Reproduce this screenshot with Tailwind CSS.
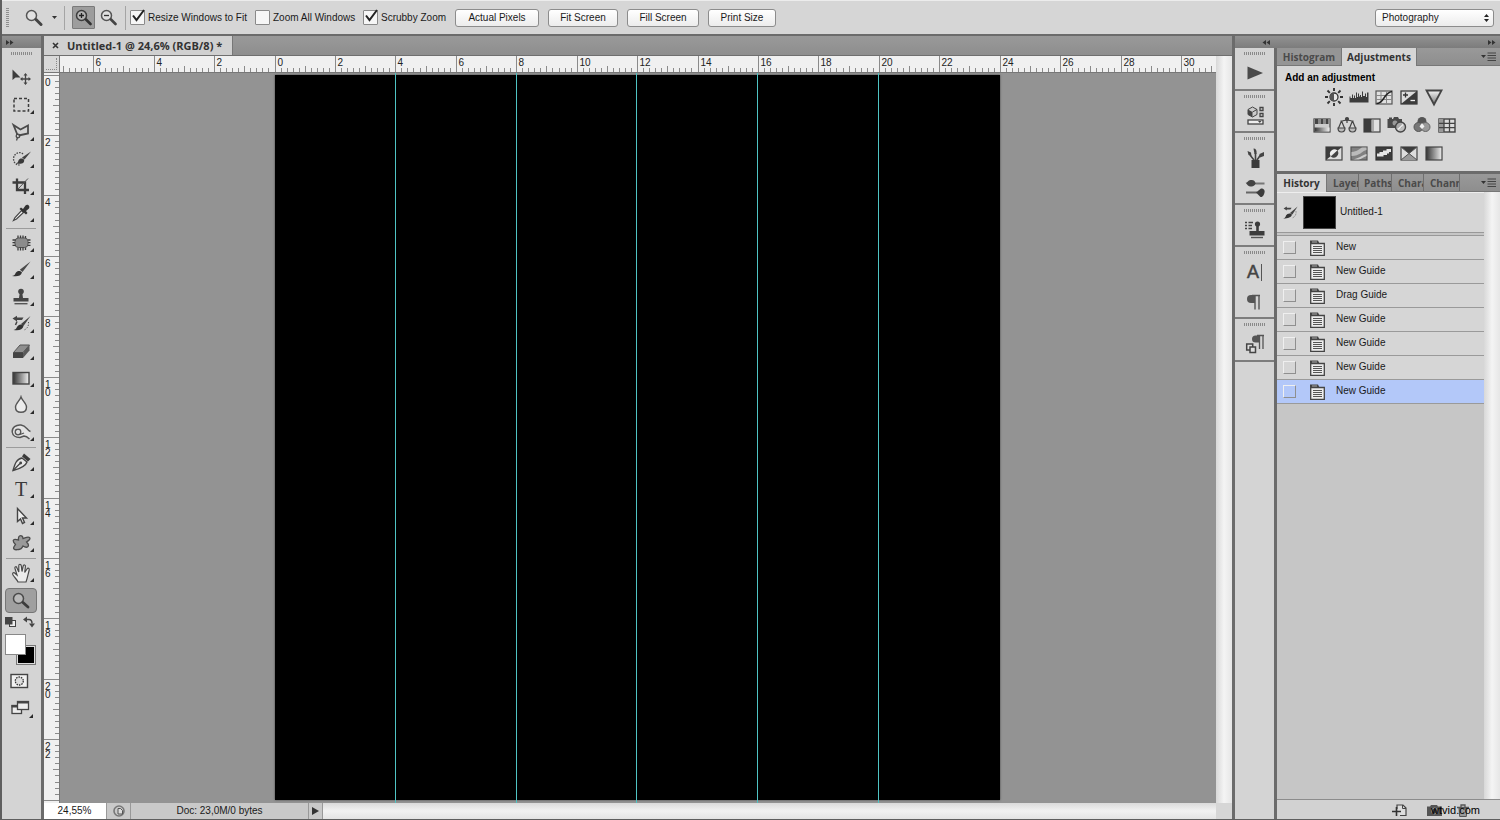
<!DOCTYPE html>
<html lang="en">
<head>
<meta charset="utf-8">
<title>Untitled-1 @ 24,6% (RGB/8)</title>
<script src="https://cdn.jsdelivr.net/npm/@tailwindcss/browser@4"></script>
</head>
<body class="h-screen overflow-hidden flex flex-col bg-[#5f5f5f] pl-0.5 pb-px font-['Liberation_Sans',sans-serif] text-[10px] leading-3 text-[#1a1a1a]">

<!-- Options bar -->
<header class="h-[34px] shrink-0 flex items-center bg-[#d6d6d6] border-t border-[#ececec] pl-1 pr-1.5">
  <div class="w-[3px] h-5 bg-[repeating-linear-gradient(180deg,#8f8f8f_0_1px,transparent_1px_2px)]"></div>
  <button aria-label="Zoom tool presets" class="ml-4 flex items-center gap-2">
    <svg class="w-[18px] h-[18px]" viewBox="0 0 18 18" fill="none"><circle cx="6.500" cy="6.500" r="5" fill="#e2e2e2" stroke="#555" stroke-width="1.500"/><path d="M11 10.500l5 5" stroke="#444" stroke-width="3" stroke-linecap="round"/></svg>
    <svg class="w-[7px] h-1" viewBox="0 0 7 4"><path d="M1 0h5L3.500 3z" fill="#333"/></svg>
  </button>
  <div class="w-px h-6 bg-[#a4a4a4] ml-1.5 mr-[7px]"></div>
  <button aria-label="Zoom in" class="w-[23px] h-[23px] grid place-items-center rounded-[1px] bg-[#9d9d9d] border border-[#7a7a7a]">
    <svg class="w-[17px] h-[17px]" viewBox="0 0 17 17" fill="none"><circle cx="6.500" cy="6.500" r="5" fill="#b4b4b4" stroke="#3c3c3c" stroke-width="1.500"/><path d="M11 10.500l4.500 4.500" stroke="#333" stroke-width="2.600" stroke-linecap="round"/><path d="M4 6.500h5M6.500 4v5" stroke="#222" stroke-width="1.300"/></svg>
  </button>
  <button aria-label="Zoom out" class="w-[23px] h-[23px] ml-0.5 grid place-items-center">
    <svg class="w-[17px] h-[17px]" viewBox="0 0 17 17" fill="none"><circle cx="6.500" cy="6.500" r="5" fill="#e0e0e0" stroke="#555" stroke-width="1.500"/><path d="M11 10.500l4.500 4.500" stroke="#444" stroke-width="2.600" stroke-linecap="round"/><path d="M4 6.500h5" stroke="#333" stroke-width="1.300"/></svg>
  </button>
  <div class="w-px h-6 bg-[#a4a4a4] ml-[5px] mr-1"></div>
  <label class="flex items-center gap-[3px] w-[125px] whitespace-nowrap">
    <span class="relative w-[15px] h-[15px] shrink-0">
      <input type="checkbox" checked class="peer block appearance-none w-[15px] h-[15px] rounded-[1px] border border-[#8a8a8a] bg-[#f6f6f6]">
      <svg class="hidden peer-checked:block absolute left-0 -top-1 w-[17px] h-[17px] pointer-events-none" viewBox="0 0 17 17" fill="none"><path d="M3 9.500l3.500 4.500L14 4" stroke="#222" stroke-width="2"/></svg>
    </span>Resize Windows to Fit</label>
  <label class="flex items-center gap-[3px] w-[108px] whitespace-nowrap">
    <input type="checkbox" class="appearance-none w-[15px] h-[15px] shrink-0 rounded-[1px] border border-[#8a8a8a] bg-[#f6f6f6]">Zoom All Windows</label>
  <label class="flex items-center gap-[3px] w-[92px] whitespace-nowrap">
    <span class="relative w-[15px] h-[15px] shrink-0">
      <input type="checkbox" checked class="peer block appearance-none w-[15px] h-[15px] rounded-[1px] border border-[#8a8a8a] bg-[#f6f6f6]">
      <svg class="hidden peer-checked:block absolute left-0 -top-1 w-[17px] h-[17px] pointer-events-none" viewBox="0 0 17 17" fill="none"><path d="M3 9.500l3.500 4.500L14 4" stroke="#222" stroke-width="2"/></svg>
    </span>Scrubby Zoom</label>
  <div class="flex gap-[9px] whitespace-nowrap">
    <button class="w-[84px] h-[18px] rounded-[3px] border border-[#8c8c8c] bg-linear-to-b from-white to-[#ececec]">Actual Pixels</button>
    <button class="w-[70px] h-[18px] rounded-[3px] border border-[#8c8c8c] bg-linear-to-b from-white to-[#ececec]">Fit Screen</button>
    <button class="w-[72px] h-[18px] rounded-[3px] border border-[#8c8c8c] bg-linear-to-b from-white to-[#ececec]">Fill Screen</button>
    <button class="w-[68px] h-[18px] rounded-[3px] border border-[#8c8c8c] bg-linear-to-b from-white to-[#ececec]">Print Size</button>
  </div>
  <div class="relative ml-auto">
    <select aria-label="Workspace" class="block appearance-none w-[119px] h-[18px] pl-1.5 rounded-[3px] border border-[#8c8c8c] bg-linear-to-b from-white to-[#ececec]"><option>Photography</option></select>
    <svg class="absolute right-1 top-1 w-[7px] h-[10px] pointer-events-none" viewBox="0 0 7 10"><path d="M1 4h5L3.500 1zM1 6h5L3.500 9z" fill="#222"/></svg>
  </div>
</header>

<main class="flex-1 min-h-0 flex gap-[3px] pt-0.5 bg-[#6b6b6b]">

  <!-- Toolbox -->
  <aside class="w-[39px] shrink-0 flex flex-col bg-[#d4d4d4]">
    <div class="h-3 shrink-0 bg-linear-to-b from-[#929292] to-[#7c7c7c] flex items-center pl-1"><svg class="w-2 h-[5px]" viewBox="0 0 8 5"><path d="M0 0l3.500 2.500L0 5zM4 0l3.500 2.500L4 5z" fill="#333"/></svg></div>
    <div class="mx-auto mt-1 mb-[9px] w-[21px] h-[3px] shrink-0 bg-[repeating-linear-gradient(90deg,#8a8a8a_0_1px,transparent_1px_2px)]"></div>

    <div class="flex flex-col items-center pr-px [&>button]:relative [&>button]:w-8 [&>button]:h-[27px] [&>button]:grid [&>button]:place-items-center [&>button]:shrink-0 [&>.sub]:after:absolute [&>.sub]:after:right-[3px] [&>.sub]:after:bottom-1 [&>.sub]:after:w-1 [&>.sub]:after:h-1 [&>.sub]:after:bg-[#2a2a2a] [&>.sub]:after:[clip-path:polygon(100%_0,100%_100%,0_100%)]">
      <button aria-label="Move"><svg class="w-5 h-5" viewBox="0 0 20 20"><path d="M1.500 1.500v10.500l3-2.500h5z" fill="#3c3c3c"/><path d="M14.500 6.500v9M10 11h9" stroke="#444" stroke-width="1.300"/><path d="M14.500 5l2 2.500h-4zM14.500 17l2-2.500h-4zM9 11l2.500-2v4zM20 11l-2.500-2v4z" fill="#444"/></svg></button>
      <button class="sub" aria-label="Marquee"><svg class="w-5 h-5" viewBox="0 0 20 20" fill="none"><rect x="3" y="3.500" width="14.500" height="12.500" stroke="#3c3c3c" stroke-width="1.500" stroke-dasharray="3 2"/></svg></button>
      <button class="sub" aria-label="Lasso"><svg class="w-5 h-5" viewBox="0 0 20 20" fill="none" stroke="#4a4a4a" stroke-width="1.800"><path d="M6.500 13L2.500 3 9.500 7.500 17 3.500V11.500L7.500 13.500"/><circle cx="7" cy="14" r="1.800" stroke-width="1.300"/><path d="M6.500 15.500L5.500 18.500" stroke-width="1.300"/></svg></button>
      <button class="sub" aria-label="Quick selection"><svg class="w-5 h-5" viewBox="0 0 20 20" fill="none"><path d="M12 5C9 2 3 4 2.500 9.500c0 4 2.500 6.500 6 6.500" stroke="#444" stroke-width="1.300" stroke-dasharray="1.500 1.200"/><path d="M20 2.500l-6.500 8-2.500-2z" fill="#444"/><path d="M13 10.500c1 3.500-2 5-8 4 2.500-1 2-2.500 3-4s4-1.500 5 0z" fill="#3a3a3a"/></svg></button>
      <button class="sub" aria-label="Crop"><svg class="w-5 h-5" viewBox="0 0 20 20" fill="none"><path d="M6 2.500v11.500H18M1.500 6.500h12.500v11.500" stroke="#3c3c3c" stroke-width="2.300"/><path d="M7 13L17 2.500" stroke="#555"/></svg></button>
      <button class="sub" aria-label="Eyedropper"><svg class="w-5 h-5" viewBox="0 0 20 20"><path d="M10.500 7.500l2 2-7 6.500-3 1.500 1.500-3z" fill="#eee" stroke="#444" stroke-width="1.200"/><path d="M8.500 6l1.500-1.500 2 1.500 2.500-3.500c2-2 5 .500 3.500 3L15 8l1.500 2L15 11.500z" fill="#333"/></svg></button>
      <div class="w-[30px] h-[3px] border-b border-[#9c9c9c]"></div>
      <button class="sub" aria-label="Patch"><svg class="w-5 h-5" viewBox="0 0 20 20"><rect x="4" y="5" width="13" height="9.500" rx="3.500" fill="#8c8c8c" stroke="#555"/><path d="M7 2.500V5M9.500 2.500V5M12 2.500V5M14.500 3v2M7 14.500v3M9.500 14.500v3M12 14.500v3M14.500 14.500V17M1.500 7h3M1.500 9.700h2.500M1.500 12.300h3M17 7h2.500M17 9.700h2.500M17 12.300h2.500" stroke="#3c3c3c" stroke-width="1.300"/></svg></button>
      <button class="sub" aria-label="Brush"><svg class="w-5 h-5" viewBox="0 0 20 20"><path d="M19.500 1.500L11.500 12l-2.700-2.200z" fill="#4a4a4a"/><path d="M11 12.300c-1 4-5 4.500-10 3.700 3-.500 3-2 4-3.500s3.500-2.500 6-.200z" fill="#333"/></svg></button>
      <button class="sub" aria-label="Clone stamp"><svg class="w-5 h-5" viewBox="0 0 20 20"><circle cx="10" cy="4.500" r="2.800" fill="#444"/><path d="M8.700 6h2.600l.7 5h5.500v3.500H2.500V11H8z" fill="#444"/><path d="M3.500 16.700h13" stroke="#555" stroke-width="1.400"/></svg></button>
      <button class="sub" aria-label="History brush"><svg class="w-5 h-5" viewBox="0 0 20 20" fill="none"><path d="M1.500 4.500l4.500-2.700v1.700h6.500L11 6H6v1.500z" fill="#444"/><path d="M19.500 2l-7 10-2.500-2z" fill="#444"/><path d="M12.500 12c-1 4-4.500 4.700-10 4 2.500-.500 3-2 3.500-3 1.500-2.500 4.500-3.500 6.500-1z" fill="#333"/><path d="M6 7.500L4.500 11" stroke="#444" stroke-width="1.500"/><path d="M17.500 8c.500 4-1.500 7-4.500 8" stroke="#555" stroke-dasharray="1.200 1.500"/></svg></button>
      <button class="sub" aria-label="Eraser"><svg class="w-5 h-5" viewBox="0 0 20 20"><path d="M9 4h9.500l-6.500 7.500H2.500z" fill="#8f8f8f" stroke="#555"/><path d="M2 11.500h10V17H2z" fill="#444"/><path d="M12 11.500L18.500 4v5.500L12 17z" fill="#5a5a5a"/></svg></button>
      <button class="sub" aria-label="Gradient"><svg class="w-5 h-5" viewBox="0 0 20 20"><defs><linearGradient id="gh"><stop stop-color="#333"/><stop offset="1" stop-color="#f0f0f0"/></linearGradient></defs><rect x="2" y="4.500" width="16" height="11.500" fill="url(#gh)" stroke="#444" stroke-width="1.400"/></svg></button>
      <button class="sub" aria-label="Blur"><svg class="w-5 h-5" viewBox="0 0 20 20"><path d="M10 2c1 3.500 5.500 6.500 5.500 10 0 3.300-2.200 5.300-5.500 5.300S4.500 15.300 4.500 12C4.500 8.500 9 5.500 10 2z" fill="#ececec" stroke="#555" stroke-width="1.400"/></svg></button>
      <button class="sub" aria-label="Dodge"><svg class="w-5 h-5" viewBox="0 0 20 20"><path d="M19.500 9.500C16 8.500 15.500 3.500 10 3 5 2.500.8 5.500 1.200 10c.5 3.500 3.500 5.500 7.800 5.500l4-1.500c2 0 3.500 1 5.500 3" fill="#e4e4e4" stroke="#555" stroke-width="1.400"/><circle cx="7" cy="10" r="2.800" fill="#ddd" stroke="#555" stroke-width="1.300"/><path d="M9 12.500l4-1.500" stroke="#555" stroke-width="1.300"/></svg></button>
      <div class="w-[30px] h-[3px] border-b border-[#9c9c9c]"></div>
      <button class="sub" aria-label="Pen"><svg class="w-5 h-5" viewBox="0 0 20 20"><path d="M11 6l5 4c-1.500 4.500-6 6.500-14 8.500C4 11.500 5.500 7 11 6z" fill="#e6e6e6" stroke="#444" stroke-width="1.400"/><path d="M2.500 18l6.500-6.500" stroke="#444" stroke-width="1.200"/><circle cx="9.700" cy="11" r="1.400" fill="#444"/><path d="M11 4.500L13 1.500l6.500 5.500-2.500 2.500z" fill="#3a3a3a"/></svg></button>
      <button aria-label="Type" class="sub font-['Liberation_Serif',serif] text-xl leading-5 text-[#3a3a3a]">T</button>
      <button class="sub" aria-label="Path selection"><svg class="w-5 h-5" viewBox="0 0 20 20"><path d="M6.500 2.500v13l3-2.500 2 4.500 2-1-2-4.500h4z" fill="#eee" stroke="#444" stroke-width="1.400"/></svg></button>
      <button class="sub" aria-label="Custom shape"><svg class="w-5 h-5" viewBox="0 0 20 20"><path d="M8.500 3c2-1 3.500.500 3.500 2.500 2-.500 5-2.500 6.500-1S17 8 15.500 9c1 1.500 3 2.500 1.500 4.500-1.500 1.500-3.500.500-5-.500-1 2-2 3.500-4 3.500s-3.500 1-5-.500 1-3.500 1.500-4.500C3 10 1.500 8.500 2.500 7S6 6.500 7.500 7c0-1.500-.500-3 1-4z" fill="#999" stroke="#4c4c4c" stroke-width="1.300"/></svg></button>
      <div class="w-[30px] h-[3px] border-b border-[#9c9c9c]"></div>
      <button class="sub" aria-label="Hand"><svg class="w-5 h-5" viewBox="0 0 20 20"><path d="M7 19c-1-2.500-3.500-4.500-5-7C.8 9.500 3 9 4.200 10.500L6 12 4 5.500c-.500-2 1.500-2.500 2-.500L7.800 9V2.800c0-2 2.200-2 2.500 0L11 8.500l1.200-5.500c.5-1.700 2.500-1.200 2.200.500L13.700 9.500l2.300-3.500c1-1.500 2.700-.500 2.200 1-1 3.500-1.700 8-3.200 12z" fill="#ececec" stroke="#4a4a4a" stroke-width="1.200"/></svg></button>
      <button aria-label="Zoom" aria-pressed="true" class="mt-0.5 h-[25px]! rounded-sm bg-[#9f9f9f] border border-[#767676]"><svg class="w-5 h-5" viewBox="0 0 20 20"><circle cx="7.500" cy="7.500" r="5" fill="#b9b9b9" stroke="#4a4a4a" stroke-width="1.500"/><path d="M12 11.500l5 4.500" stroke="#3c3c3c" stroke-width="2.800" stroke-linecap="round"/></svg></button>
    </div>

    <!-- Foreground and background colours -->
    <div class="flex justify-between px-[3px] pr-1.5 mt-[3px]">
      <button aria-label="Default colours"><svg class="w-3 h-3" viewBox="0 0 12 12"><rect x="4.500" y="4.500" width="6" height="6" fill="#eee" stroke="#444"/><rect x="0" y="1" width="7.500" height="7.500" fill="#444"/></svg></button>
      <button aria-label="Swap colours"><svg class="w-3 h-3" viewBox="0 0 12 12" fill="none"><path d="M3 3.500h3c2 0 3 1 3 4" stroke="#444" stroke-width="1.500"/><path d="M0 3.500L4 .5v6zM9 11.500l3-4H6z" fill="#444"/></svg></button>
    </div>
    <div class="relative h-[31px] mt-1.5 mx-[3px] shrink-0">
      <button aria-label="Background colour" class="absolute left-[11px] top-[11px] w-[20px] h-[20px] bg-black border border-[#777] shadow-[inset_0_0_0_1px_#ddd]"></button>
      <button aria-label="Foreground colour" class="absolute left-0 top-0 w-[21px] h-[21px] bg-white border border-[#888]"></button>
    </div>
    <button aria-label="Quick mask" class="w-5 mt-2 ml-2"><svg class="w-5 h-4" viewBox="0 0 20 16"><rect x="1" y="1.500" width="16.500" height="13" fill="#f2f2f2" stroke="#444" stroke-width="1.400"/><circle cx="9.300" cy="8" r="4" fill="#ddd" stroke="#333" stroke-width="1.300" stroke-dasharray="1.500 1"/></svg></button>
    <button aria-label="Screen mode" class="relative w-8 mt-[9px] ml-0.5 flex justify-center"><svg class="w-5 h-5" viewBox="0 0 20 20"><rect x="2" y="7.500" width="9.500" height="8" fill="#ececec" stroke="#444" stroke-width="1.300"/><rect x="1.500" y="7" width="10.500" height="2.500" fill="#444"/><rect x="7.500" y="3.500" width="11" height="8" fill="#ececec" stroke="#444" stroke-width="1.300"/><rect x="7" y="3" width="12" height="2.500" fill="#444"/></svg><i class="absolute right-[3px] bottom-0 w-1 h-1 bg-[#2a2a2a] [clip-path:polygon(100%_0,100%_100%,0_100%)]"></i></button>
  </aside>

  <!-- Document window -->
  <section class="flex-1 min-w-0 flex flex-col">
    <div class="h-5 shrink-0 flex items-stretch bg-linear-to-b from-[#999] to-[#8e8e8e] border-b border-[#6f6f6f]">
      <div class="flex items-center gap-2 pl-2 pr-2.5 bg-[#d0d0d0] border-r border-[#777] font-['Open_Sans',sans-serif] font-bold text-[11px] leading-4 text-[#333] whitespace-nowrap">
        <button aria-label="Close document"><svg class="w-[7px] h-[7px]" viewBox="0 0 7 7"><path d="M1 1l5 5M6 1L1 6" stroke="#333" stroke-width="1.600"/></svg></button>
        <span>Untitled-1 @ 24,6% (RGB/8) *</span>
      </div>
    </div>

    <div class="flex-1 min-h-0 grid grid-cols-[16px_minmax(0,1fr)_16px] grid-rows-[17px_minmax(0,1fr)]">
      <div class="bg-[#d8d8d8] border-r border-b border-[#777] p-0.5"><div class="w-full h-full border-r border-b border-dotted border-[#888]"></div></div>
      <div class="bg-[#f0f0f0] border-b border-[#777] overflow-hidden"><svg id="ruler-x" class="w-full h-4" font-size="10" fill="#222"></svg></div>
      <div class="row-span-2 bg-linear-to-r from-[#d8d8d8] via-[#f4f4f4] to-[#e6e6e6]"></div>
      <div class="bg-[#f0f0f0] border-r border-[#777] overflow-hidden"><svg id="ruler-y" class="w-[15px] h-full" font-size="10" fill="#222"></svg></div>
      <!-- Canvas with artboard and guides -->
      <div class="relative overflow-hidden bg-[#939393]">
        <div class="absolute left-[215px] top-0.5 w-[725px] h-[725px] bg-black shadow-[0_0_2px_#444]"></div>
        <div class="absolute top-0 bottom-0 left-[335px] w-px bg-[#4fc4c4]"></div>
        <div class="absolute top-0 bottom-0 left-[456px] w-px bg-[#4fc4c4]"></div>
        <div class="absolute top-0 bottom-0 left-[576px] w-px bg-[#4fc4c4]"></div>
        <div class="absolute top-0 bottom-0 left-[697px] w-px bg-[#4fc4c4]"></div>
        <div class="absolute top-0 bottom-0 left-[818px] w-px bg-[#4fc4c4]"></div>
      </div>
    </div>

    <div class="h-4 shrink-0 flex items-stretch bg-[#c9c9c9] whitespace-nowrap">
      <input aria-label="Zoom level" value="24,55%" class="w-[63px] pr-px bg-white text-center border-r border-[#999]">
      <button aria-label="Document status" class="w-6 grid place-items-center border-r border-[#999]"><svg class="w-3 h-3" viewBox="0 0 12 12" fill="none"><circle cx="6" cy="6" r="5" stroke="#777" stroke-width="1.600"/><path d="M5 3.500h2.500l2 2V9H5z" fill="#ddd" stroke="#555"/></svg></button>
      <div class="w-[178px] text-center leading-4 border-r border-[#999]">Doc: 23,0M/0 bytes</div>
      <button aria-label="Status menu" class="w-3.5 grid place-items-center border-r border-[#999]"><svg class="w-[7px] h-2" viewBox="0 0 7 8"><path d="M0 0l7 4-7 4z" fill="#333"/></svg></button>
      <div class="flex-1 bg-linear-to-b from-[#dadada] via-[#f2f2f2] to-[#e4e4e4]"></div>
      <div class="w-4 bg-[#d6d6d6]"></div>
    </div>
  </section>

  <!-- Right side -->
  <section class="w-[265px] shrink-0 flex flex-col">
    <div class="h-3 shrink-0 flex items-center justify-between pl-[27px] pr-1 bg-linear-to-b from-[#929292] to-[#7c7c7c]">
      <svg class="w-2 h-[5px]" viewBox="0 0 8 5"><path d="M4 0L.5 2.500 4 5zM8 0L4.500 2.500 8 5z" fill="#333"/></svg>
      <svg class="w-2 h-[5px]" viewBox="0 0 8 5"><path d="M0 0l3.500 2.500L0 5zM4 0l3.500 2.500L4 5z" fill="#333"/></svg>
    </div>
    <div class="flex-1 min-h-0 flex gap-[3px]">
      <!-- Collapsed panel dock -->
      <nav aria-label="Panels" class="w-[39px] shrink-0 bg-[#d4d4d4] flex flex-col [&>div]:flex [&>div]:flex-col [&>div]:items-center [&>div]:pt-1 [&>div]:border-b-2 [&>div]:border-[#7d7d7d]">
        <div class="h-[43px]"><i class="w-[21px] h-[3px] mb-[3px] bg-[repeating-linear-gradient(90deg,#8a8a8a_0_1px,transparent_1px_2px)]"></i>
          <button aria-label="Actions" class="h-[30px]"><svg class="w-5 h-5" viewBox="0 0 20 20"><path d="M2.500 3.500L18 10 2.500 16.500z" fill="#4a4a4a"/></svg></button></div>
        <div class="h-[42px]"><i class="w-[21px] h-[3px] mb-[3px] bg-[repeating-linear-gradient(90deg,#8a8a8a_0_1px,transparent_1px_2px)]"></i>
          <button aria-label="Properties" class="h-[30px]"><svg class="w-5 h-5" viewBox="0 0 20 20" fill="none"><path d="M3 3.500L7.500 1 12 3.500v5L7.500 11 3 8.500z" fill="#ccc" stroke="#444"/><path d="M3 3.500L7.500 6v5L3 8.500z" fill="#444"/><path d="M7.500 6L12 3.500" stroke="#444"/><path d="M15 1.500h3v3h-3zM15 7.500h3v3h-3z" stroke="#444" stroke-width="1.300"/><rect x="3" y="14" width="15" height="4" fill="#eee" stroke="#444" stroke-width="1.300"/><path d="M13 15h3.500l-1.700 2z" fill="#444"/></svg></button></div>
        <div class="h-[72px]"><i class="w-[21px] h-[3px] mb-[3px] bg-[repeating-linear-gradient(90deg,#8a8a8a_0_1px,transparent_1px_2px)]"></i>
          <button aria-label="Brush presets" class="h-[30px]"><svg class="w-5 h-5" viewBox="0 0 20 20" fill="none"><path d="M6.500 12h8v8.500h-8z" fill="#3c3c3c"/><path d="M9 12L5 7M10.500 12V5M12 12l3.500-5" stroke="#444" stroke-width="1.600"/><path d="M2.500 3L6 4.500l.5 3.500-3-1zM8.500.5c2.500 0 3.500 2 3 5.500H9.500zM19 4v4l-4 1.500-.5-3.500z" fill="#444"/></svg></button>
          <button aria-label="Brush" class="h-[30px]"><svg class="w-5 h-5" viewBox="0 0 20 20"><path d="M10.500 4.500h9v2h-9z" fill="#777"/><path d="M.5 4.500c2 1 2-2 5-2.500s4 .500 5.500 3.500c-1.500 2.500-3.500 3-5.500 3S2.500 7 .5 4.500z" fill="#444"/><path d="M1 13.500h11v2H1z" fill="#666"/><path d="M11 14.500l5-4c3 0 4 2 3.500 4s-1.500 5-4 4.500z" fill="#3c3c3c"/></svg></button></div>
        <div class="h-[42px]"><i class="w-[21px] h-[3px] mb-[3px] bg-[repeating-linear-gradient(90deg,#8a8a8a_0_1px,transparent_1px_2px)]"></i>
          <button aria-label="Clone source" class="h-[30px]"><svg class="w-5 h-5" viewBox="0 0 20 20"><path d="M0 2.500h2M0 5.500h2M0 8.500h2M3.500 2.500H8M3.500 5.500H7M3.500 8.500H7" stroke="#444" stroke-width="1.400"/><circle cx="12.500" cy="4" r="2.600" fill="#3c3c3c"/><path d="M11.200 5h2.600v6h5.700v4.500h-15V11h6.700z" fill="#3c3c3c"/><path d="M6 17.500h12" stroke="#555" stroke-width="1.400"/></svg></button></div>
        <div class="h-[72px]"><i class="w-[21px] h-[3px] mb-[3px] bg-[repeating-linear-gradient(90deg,#8a8a8a_0_1px,transparent_1px_2px)]"></i>
          <button aria-label="Character" class="h-[30px] flex items-center text-lg leading-5 text-[#444]"><span class="[-webkit-text-stroke:0.5px_#444]">A</span><span class="w-px h-[17px] ml-0.5 bg-[#555]"></span></button>
          <button aria-label="Paragraph" class="h-[30px]"><svg class="w-5 h-5" viewBox="0 0 20 20"><path d="M10 3H6a4 4 0 0 0 0 8h4z" fill="#555"/><path d="M10 3v14.500M14 3v14.500M7 3.500h8" stroke="#555" stroke-width="1.400"/></svg></button></div>
        <div class="h-[43px]"><i class="w-[21px] h-[3px] mb-[3px] bg-[repeating-linear-gradient(90deg,#8a8a8a_0_1px,transparent_1px_2px)]"></i>
          <button aria-label="Paragraph styles" class="h-[30px]"><svg class="w-5 h-5" viewBox="0 0 20 20"><path d="M14 1.500h-3.500a3.500 3.500 0 0 0 0 7H14z" fill="#555"/><path d="M14.500 1v14M18 1v14M12 1.500h7" stroke="#555" stroke-width="1.300"/><rect x="1.700" y="10" width="6" height="6" fill="#ddd" stroke="#444" stroke-width="1.500"/><rect x="5" y="13" width="5.500" height="5.500" fill="#ddd" stroke="#444" stroke-width="1.500"/></svg></button></div>
      </nav>

      <div class="flex-1 min-w-0 flex flex-col gap-[3px]">
        <!-- Adjustments -->
        <section class="h-[123px] shrink-0 bg-[#d6d6d6] flex flex-col">
          <div class="h-[18px] shrink-0 flex bg-linear-to-b from-[#999] to-[#8e8e8e] border-b border-[#777] font-['Open_Sans',sans-serif] font-bold text-[10px] leading-4 text-[#333]">
            <button class="w-[65px] text-[#4a4a4a] border-r border-[#777] bg-[#959595]">Histogram</button>
            <button class="w-[75px] h-[18px] bg-[#d6d6d6] border-r border-[#777]">Adjustments</button>
            <button aria-label="Panel menu" class="ml-auto mr-[3px]"><svg class="w-4 h-[9px]" viewBox="0 0 16 9"><path d="M0 3h5L2.500 6z" fill="#333"/><path d="M6.500 1H15M6.500 3.500H15M6.500 6H15M6.500 8.500H15" stroke="#444"/></svg></button>
          </div>
          <h2 class="pl-2 pt-1.5 font-bold text-black">Add an adjustment</h2>
          <div class="flex-1 flex flex-col items-center pr-[9px] [&>div]:flex [&>div]:h-7 [&>div>button]:w-[25px] [&>div>button]:h-[26px] [&>div>button]:grid [&>div>button]:place-items-center">
            <div>
              <button aria-label="Brightness/Contrast"><svg class="w-5 h-5" viewBox="0 0 20 20" fill="none"><circle cx="10" cy="10" r="4" fill="#e8e8e8" stroke="#333" stroke-width="1.300"/><path d="M10 6a4 4 0 0 0 0 8z" fill="#555"/><path d="M10 1v3M10 16v3M1 10h3M16 10h3M3.500 3.500l2.300 2.300M14.200 14.200l2.300 2.300M3.500 16.500l2.300-2.300M14.200 5.800l2.300-2.300" stroke="#333" stroke-width="1.900"/></svg></button>
              <button aria-label="Levels"><svg class="w-5 h-5" viewBox="0 0 20 20"><path d="M.5 15.500V9.500h1V11H3V7.500h1V11h1V8.500h1V11h1V5.500h1V10h1V6.500h1v3h1V8h1v2h1V4.500h1V9h2V6.500h1V10h1V5.500h1.500v10z" fill="#3c3c3c"/></svg></button>
              <button aria-label="Curves"><svg class="w-5 h-5" viewBox="0 0 20 20" fill="none"><rect x="2" y="4" width="16" height="13" fill="#e0e0e0" stroke="#555" stroke-width="1.200"/><path d="M2 8.500h16M2 12.500h16M7 4v13M12.500 4v13" stroke="#888"/><path d="M2.500 16.500c8 0 7-11 15.500-12" stroke="#222" stroke-width="1.700"/></svg></button>
              <button aria-label="Exposure"><svg class="w-5 h-5" viewBox="0 0 20 20"><rect x="2" y="4" width="16" height="13" fill="#ddd" stroke="#333" stroke-width="1.200"/><path d="M18 4v13H2z" fill="#3c3c3c"/><path d="M4 8h5M6.500 5.500v5" stroke="#333" stroke-width="1.300"/><path d="M11.500 13.500h4.500" stroke="#eee" stroke-width="1.300"/></svg></button>
              <button aria-label="Vibrance"><svg class="w-5 h-5" viewBox="0 0 20 20"><defs><linearGradient id="gv" x2="0" y2="1"><stop stop-color="#f4f4f4"/><stop offset="1" stop-color="#777"/></linearGradient></defs><path d="M2.500 3.500h15L10 17.500z" fill="url(#gv)" stroke="#444" stroke-width="1.800"/></svg></button>
            </div>
            <div>
              <button aria-label="Hue/Saturation"><svg class="w-5 h-5" viewBox="0 0 20 20"><rect x="2" y="4" width="16" height="13" fill="#ccc" stroke="#444" stroke-width="1.200"/><path d="M2 4h16v5H2z" fill="#888"/><path d="M3 4h3v5H3zM9 4h2v5H9zM14 4h2v5h-2z" fill="#444"/><path d="M2.500 12.500h15v4h-15z" fill="url(#gh)"/></svg></button>
              <button aria-label="Color Balance"><svg class="w-5 h-5" viewBox="0 0 20 20" fill="none" stroke="#444" stroke-width="1.200"><path d="M10 3v5M3.500 6c3 0 4-1 6.500-1s3.500 1 6.500 1M4.500 6l-3 7M4.500 6l3 7M15.500 6l-3 7M15.500 6l3 7"/><path d="M1 13h7c0 3-1.500 4-3.500 4S1 16 1 13zM12 13h7c0 3-1.500 4-3.500 4S12 16 12 13z" fill="#bbb"/><circle cx="10" cy="4" r="1.500" fill="#444"/></svg></button>
              <button aria-label="Black &amp; White"><svg class="w-5 h-5" viewBox="0 0 20 20"><rect x="2" y="4" width="16" height="13" fill="#e0e0e0" stroke="#444" stroke-width="1.200"/><path d="M2 4h7.500v13H2z" fill="#3c3c3c"/><path d="M10 5h2v11h-2z" fill="#aaa"/></svg></button>
              <button aria-label="Photo Filter"><svg class="w-5 h-5" viewBox="0 0 20 20"><path d="M.5 4H2V2.500h3V4h1l1-2h4l1 2h3v9H.5z" fill="#4a4a4a"/><circle cx="8" cy="8" r="2.500" fill="#999"/><circle cx="13.500" cy="12" r="5" fill="#bbb" fill-opacity=".85" stroke="#444" stroke-width="1.400"/><path d="M11 14.500l5-5" stroke="#eee" stroke-width="1.300"/></svg></button>
              <button aria-label="Channel Mixer"><svg class="w-5 h-5" viewBox="0 0 20 20"><circle cx="10" cy="6.500" r="4.500" fill="#555"/><circle cx="6.500" cy="12" r="4.500" fill="#777" stroke="#555"/><circle cx="13.500" cy="12" r="4.500" fill="#999" stroke="#666"/><path d="M10 8l2.500 3.500L10 14l-2.500-2.500z" fill="#eee"/></svg></button>
              <button aria-label="Color Lookup"><svg class="w-5 h-5" viewBox="0 0 20 20"><rect x="2" y="4" width="16" height="13" fill="#ddd" stroke="#444" stroke-width="1.400"/><path d="M2 4h5v13H2z" fill="#999"/><path d="M2 8.300h16M2 12.600h16M7 4v13M12.500 4v13" stroke="#444" stroke-width="1.300"/></svg></button>
            </div>
            <div>
              <button aria-label="Invert"><svg class="w-5 h-5" viewBox="0 0 20 20"><rect x="2" y="4" width="16" height="13" fill="#ddd" stroke="#444" stroke-width="1.200"/><path d="M2 17V4h16z" fill="#3c3c3c"/><path d="M6.800 13.500a4.500 4.500 0 0 1 6.600-6z" fill="#eee"/><path d="M6.800 13.500a4.500 4.500 0 0 0 6.600-6z" fill="#444"/></svg></button>
              <button aria-label="Posterize"><svg class="w-5 h-5" viewBox="0 0 20 20"><rect x="2" y="4" width="16" height="13" fill="#808080" stroke="#555" stroke-width="1.200"/><path d="M2.500 9c6 0 8-4 11-4.500H17.500V7C13 8 11 13 2.500 13z" fill="#bbb"/><path d="M2.500 16.500C10 16 13 12 17.500 11v2c-3 1-5 3-8 3.500z" fill="#ccc"/></svg></button>
              <button aria-label="Threshold"><svg class="w-5 h-5" viewBox="0 0 20 20"><rect x="2" y="4" width="16" height="13" fill="#3c3c3c" stroke="#333" stroke-width="1.200"/><path d="M3 10.500h2.500V9H9V7.500h3.500V6H17v3h-2v1.500h-2V12H9.500v1.500H3z" fill="#e6e6e6"/></svg></button>
              <button aria-label="Selective Color"><svg class="w-5 h-5" viewBox="0 0 20 20"><rect x="2" y="4" width="16" height="13" fill="#ddd" stroke="#444" stroke-width="1.200"/><path d="M2 4h16l-8 6.500z" fill="#3c3c3c"/><path d="M2 17h16l-8-6.500z" fill="#999"/><path d="M2 4l16 13M18 4L2 17" stroke="#555"/></svg></button>
              <button aria-label="Gradient Map"><svg class="w-5 h-5" viewBox="0 0 20 20"><rect x="2" y="4" width="16" height="13" fill="url(#gh)" stroke="#444" stroke-width="1.200"/></svg></button>
            </div>
          </div>
        </section>

        <!-- History -->
        <section class="flex-1 min-h-0 bg-[#c6c6c6] flex flex-col">
          <div class="h-[18px] shrink-0 flex bg-linear-to-b from-[#999] to-[#8e8e8e] border-b border-[#777] font-['Open_Sans',sans-serif] font-bold text-[10px] leading-4 text-[#4a4a4a] whitespace-nowrap">
            <button class="w-[50px] h-[18px] bg-[#d6d6d6] text-[#333] border-r border-[#777]">History</button>
            <button class="w-8 pl-1.5 text-left overflow-hidden border-r border-[#6f6f6f]">Layers</button>
            <button class="w-[33px] pl-[5px] text-left overflow-hidden border-r border-[#6f6f6f]">Paths</button>
            <button class="w-8 pl-1.5 text-left overflow-hidden border-r border-[#6f6f6f]">Character</button>
            <button class="w-9 pl-1.5 text-left overflow-hidden border-r border-[#6f6f6f]">Channels</button>
            <button aria-label="Panel menu" class="ml-auto mr-[3px]"><svg class="w-4 h-[9px]" viewBox="0 0 16 9"><path d="M0 3h5L2.500 6z" fill="#333"/><path d="M6.500 1H15M6.500 3.500H15M6.500 6H15M6.500 8.500H15" stroke="#444"/></svg></button>
          </div>
          <div class="flex-1 min-h-0 flex">
            <div class="flex-1 min-w-0">
              <div class="h-[41px] flex items-center bg-[#d6d6d6] border-t border-b border-t-[#eee] border-[#999] pl-[5px]">
                <svg class="w-4 h-4" viewBox="0 0 20 20" fill="none"><path d="M2 4.500l4-2.500v1.500h6l-1.500 2H6V7z" fill="#444"/><path d="M19.500 2l-6.500 10-3-2z" fill="#444"/><path d="M12.500 12c-1 4-4.500 4.500-11 5.500 2.500-1.500 3-3 3.500-4.500 1.500-2.500 5.500-3.500 7.500-1z" fill="#333"/><path d="M17.500 8c.500 4-1.500 7-4.500 8" stroke="#555" stroke-dasharray="1.200 1.500"/></svg>
                <div class="w-[33px] h-[33px] ml-[5px] bg-black border border-[#444]"></div>
                <span class="ml-1 mb-0.5">Untitled-1</span>
              </div>
              <ul id="history" class="mt-0.5 border-t border-[#999] bg-[#d6d6d6]"></ul>
            </div>
            <div class="w-4 bg-linear-to-r from-[#d8d8d8] via-[#f4f4f4] to-[#e6e6e6]"></div>
          </div>
          <footer class="relative h-5 shrink-0 flex items-center justify-end pt-px pr-[31px] bg-[#d2d2d2] border-t border-[#8c8c8c]">
            <button aria-label="New document from state" class="mr-5"><svg class="w-[15px] h-[13px]" viewBox="0 0 15 13" fill="none"><path d="M5 5V1h6l3 3v7.500H8" fill="#ddd" stroke="#444" stroke-width="1.200"/><path d="M0 7.500h9M4.500 3v9" stroke="#333" stroke-width="1.600"/><path d="M10.500 1v3.500H14" stroke="#444"/></svg></button>
            <button aria-label="New snapshot" class="mr-[15px]"><svg class="w-[15px] h-[13px]" viewBox="0 0 15 13"><path d="M0 2.500h3L4 1h6l1 1.500h4V12H0z" fill="#555"/><circle cx="7.500" cy="7" r="3" fill="#444" stroke="#999"/></svg></button>
            <button aria-label="Delete state"><svg class="w-3 h-[13px]" viewBox="0 0 12 13" fill="none"><path d="M2 4h8l-.7 8.500H2.700z" fill="#999" stroke="#555"/><path d="M0 3.500h12M4 3V1h4v2" stroke="#555" stroke-width="1.300"/></svg></button>
            <span class="absolute right-[20px] top-1 text-[11px] text-black">wtvid.com</span>
          </footer>
        </section>
      </div>
    </div>
  </section>
</main>

<template id="row">
  <li class="h-6 flex items-center pl-1.5 border-b border-[#9a9a9a]">
    <span class="w-[13px] h-[13px] border border-t-[#efefef] border-l-[#efefef] border-r-[#8f8f8f] border-b-[#8f8f8f]"></span>
    <svg class="w-[15px] h-4 ml-3.5" viewBox="0 0 15 16" fill="none"><path d="M.7 3.500h13.600v11.800H.7z" fill="#eee" stroke="#444" stroke-width="1.300"/><path d="M0 .5h8l1.500 3H0z" fill="#444"/><path d="M2 2h5" stroke="#aaa"/><path d="M3 6.500h9M3 8.500h9M3 10.500h9M3 12.500h9" stroke="#555"/></svg>
    <span class="ml-[11px] mb-0.5"></span>
  </li>
</template>

<script>
  const list = document.getElementById('history'), row = document.getElementById('row');
  const states = ['New', 'New Guide', 'Drag Guide', 'New Guide', 'New Guide', 'New Guide', 'New Guide'];
  states.forEach((name, i) => {
    const li = row.content.cloneNode(true).firstElementChild;
    li.lastElementChild.textContent = name;
    if (i === states.length - 1) li.classList.add('bg-[#b3c8f9]');
    list.append(li);
  });

  // Rulers: one labelled tick every two units, ten subdivisions between them
  const STEP = 60.43;
  function ruler(id, origin, from, lastLabel, vertical) {
    let d = '', labels = '';
    for (let n = from; n <= 400; n++) {
      const p = Math.floor(origin + n * STEP / 10) + 0.5;
      const len = n % 10 === 0 ? 16 : n % 5 === 0 ? 6 : 4;
      d += vertical ? `M15 ${p}h${-len}` : `M${p} 16v${-len}`;
      if (n % 10 === 0 && n <= lastLabel * 10) {
        const t = String(Math.abs(n / 5));
        labels += vertical
          ? [...t].map((c, i) => `<text x="1" y="${p + 10 + i * 8}">${c}</text>`).join('')
          : `<text x="${p + 2}" y="10">${t}</text>`;
      }
    }
    document.getElementById(id).innerHTML = `<path d="${d}" stroke="#8a8a8a" fill="none"/>${labels}`;
  }
  ruler('ruler-x', 215, -35, 15, false);
  ruler('ruler-y', 2, 0, 11, true);
</script>
</body>
</html>
